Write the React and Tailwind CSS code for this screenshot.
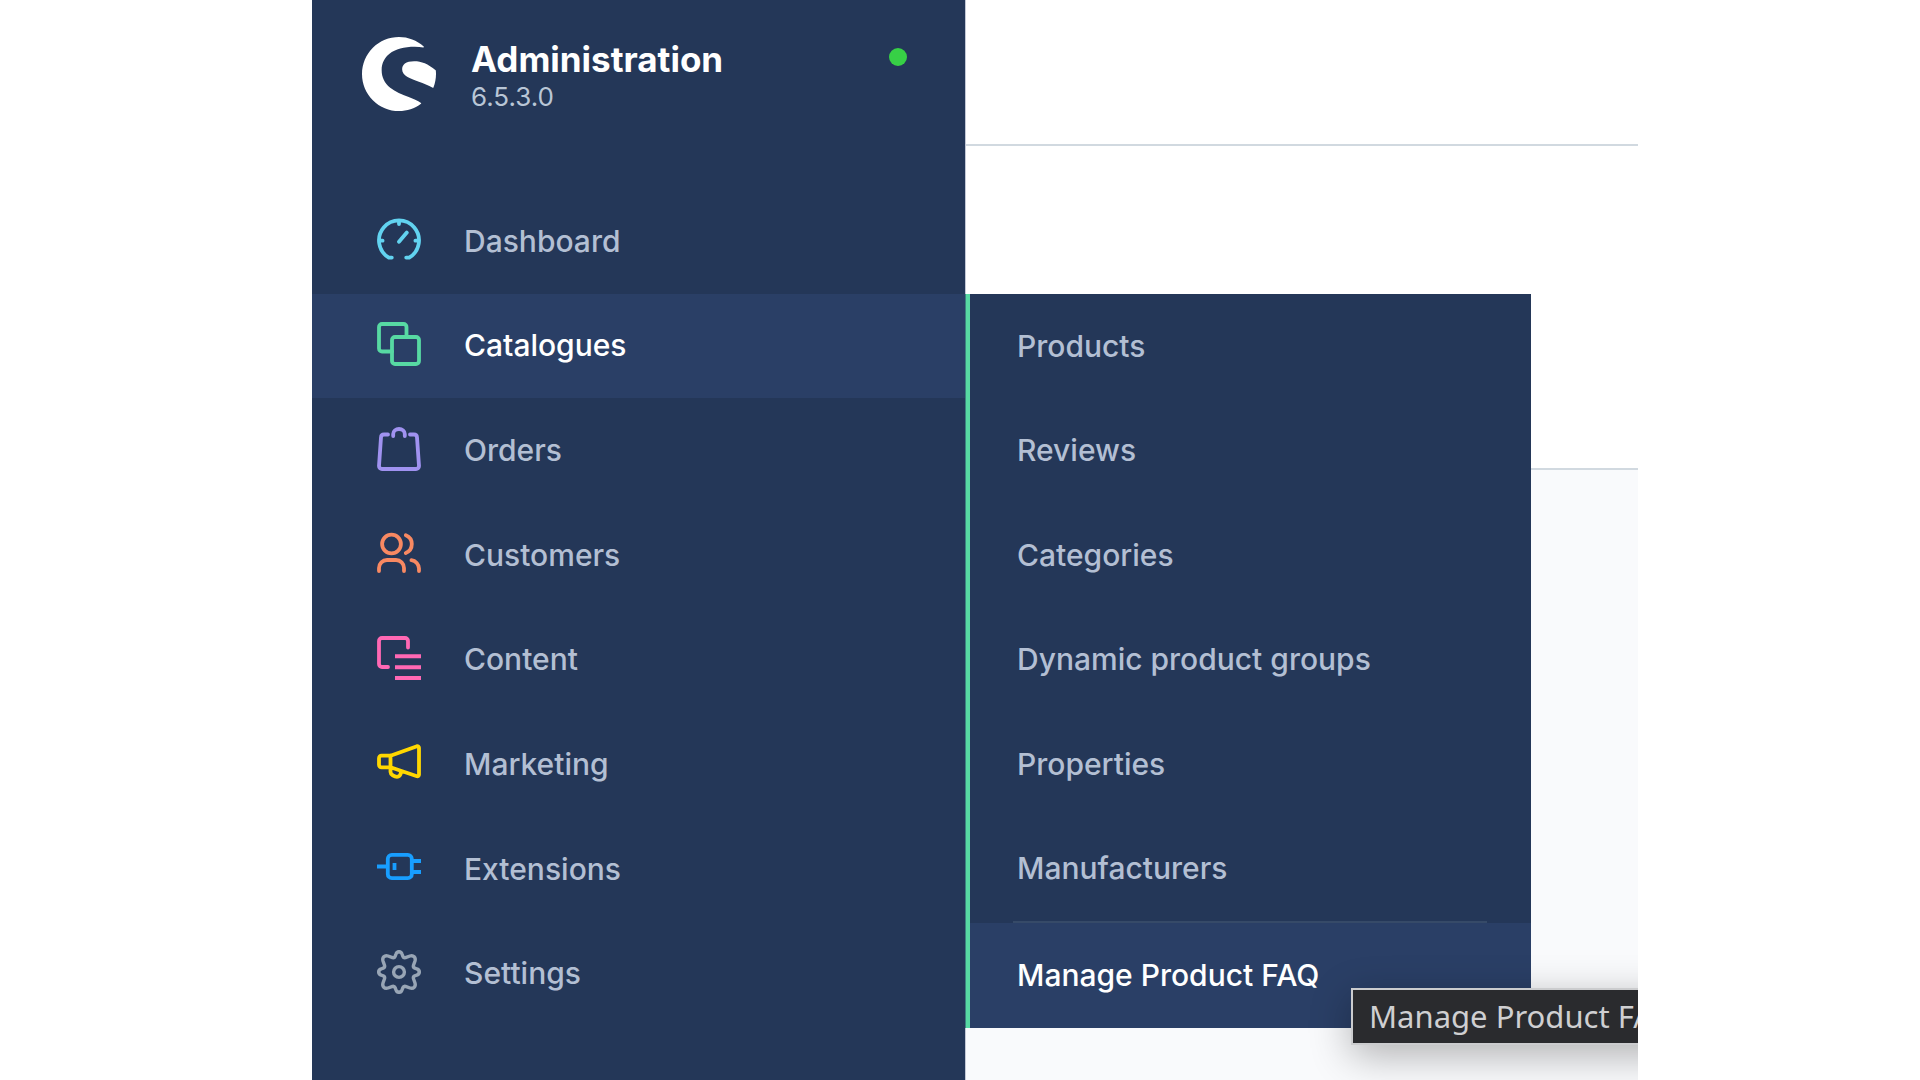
import { SiShopware } from 'react-icons/si'

function Icon({ className, children }) {
  return (
    <svg
      viewBox="0 0 44 44"
      className={`w-11 h-11 shrink-0 mb-1 ${className}`}
      fill="none"
      stroke="currentColor"
      strokeWidth="3.8"
      strokeLinecap="round"
      strokeLinejoin="round"
      aria-hidden="true"
    >
      {children}
    </svg>
  )
}

const DashboardIcon = () => (
  <Icon className="text-[#62d3f0]">
    <path d="M14.8 40.6H11.8A20 20 0 1 1 32.2 40.6H29.2M22 4v3M3 23.7h2.6M38.4 23.7H41M22 24.8l7.8-9.2" />
  </Icon>
)

const CataloguesIcon = () => (
  <Icon className="text-[#57d9a3]">
    <path d="M29.5 15V5a3 3 0 0 0-3-3H5a3 3 0 0 0-3 3v21.5a3 3 0 0 0 3 3h10" />
    <rect x="15" y="15" width="27" height="27" rx="3" />
  </Icon>
)

const OrdersIcon = () => (
  <Icon className="text-[#a092f0]">
    <path d="M11 7.5H7a3 3 0 0 0-3 2.8L2 39a3 3 0 0 0 3 3h34a3 3 0 0 0 3-3L40 10.3a3 3 0 0 0-3-2.8h-4" />
    <path d="M16.2 9V7a5.8 5 0 0 1 11.6 0v2" />
  </Icon>
)

const CustomersIcon = () => (
  <Icon className="text-[#f88962]">
    <circle cx="14.5" cy="13" r="9.4" />
    <path d="M28.8 4.2a9.6 9.6 0 0 1 0 17.8M2 40V37a8 8 0 0 1 8-8h9a8 8 0 0 1 8 8v3M34.4 29.2A8.6 8.6 0 0 1 42 37.5v2.5" />
  </Icon>
)

const ContentIcon = () => (
  <Icon className="text-[#ff68b4]">
    <path d="M31 11.5V5a3 3 0 0 0-3-3H5a3 3 0 0 0-3 3v23a3 3 0 0 0 3 3h6" />
    <path strokeLinecap="butt" strokeWidth="4" d="M18 20.3h26M18 31.2h26M18 42h26" />
  </Icon>
)

const MarketingIcon = () => (
  <Icon className="text-[#ffd700]">
    <path d="M13.5 15.7 40 6.2a1.6 1.6 0 0 1 2 1.5v27a1.6 1.6 0 0 1-2 1.5L13.5 27.3zM13.5 15.7H4.5A2.5 2.5 0 0 0 2 18.2v6.6a2.5 2.5 0 0 0 2.5 2.5h9M13.5 27.3V32c0 2.5 4 4.8 6.5 4.8 2 0 3.8-1.8 3.8-4v-1.4" />
  </Icon>
)

const ExtensionsIcon = () => (
  <Icon className="text-[#189eff]">
    <rect x="10.8" y="9.8" width="24" height="23.4" rx="4" />
    <path strokeLinecap="butt" d="M0 21.5h10.5M35 16h9M35 27h9M17.5 18v7" />
  </Icon>
)

const GEAR_QUARTER =
  'M0-20.3Q2.3-20.3 3-18L3.8-15.8Q4.6-14 6.5-14.4L11-16Q13.6-16.8 15.2-15.2Q16.8-13.6 16-11L14.4-6.5Q14-4.6 15.8-3.8L18-3Q20.3-2.3 20.3 0'

const SettingsIcon = () => (
  <Icon className="text-[#98a5b5]">
    <g transform="translate(22 22)" strokeWidth="3.4">
      <circle r="5.4" />
      {[0, 90, 180, 270].map((a) => (
        <path key={a} d={GEAR_QUARTER} transform={`rotate(${a})`} />
      ))}
    </g>
  </Icon>
)

const NAV = [
  { label: 'Dashboard', icon: DashboardIcon },
  { label: 'Catalogues', icon: CataloguesIcon, active: true },
  { label: 'Orders', icon: OrdersIcon },
  { label: 'Customers', icon: CustomersIcon },
  { label: 'Content', icon: ContentIcon },
  { label: 'Marketing', icon: MarketingIcon },
  { label: 'Extensions', icon: ExtensionsIcon },
  { label: 'Settings', icon: SettingsIcon },
]

const SUB_NAV = [
  'Products',
  'Reviews',
  'Categories',
  'Dynamic product groups',
  'Properties',
  'Manufacturers',
]

function Sidebar() {
  return (
    <aside className="w-[654px] shrink-0 border-r border-[#c3c8d6] bg-[#243758]">
      <header className="h-[189px] flex items-start pl-[50px] pr-[58px] pt-9">
        <SiShopware className="w-[74px] h-[74px] mt-px text-white" aria-label="Shopware" />
        <div className="flex-1 pl-[35px] pt-1">
          <h1 className="text-[35px] leading-[38px] font-bold text-white">Administration</h1>
          <p className="text-[26px] leading-[38px] text-[#b9c6d6]">6.5.3.0</p>
        </div>
        <span className="w-[18px] h-[18px] mt-3 rounded-full bg-[#37d046]" />
      </header>

      <nav className="h-[837px] grid grid-rows-8">
        {NAV.map(({ label, icon: NavIcon, active }) => (
          <a
            key={label}
            href="#"
            className={`flex items-center gap-[43px] pl-[65px] text-[30px] font-medium ${
              active ? 'bg-[#2a3f66] text-white' : 'text-[#b3bfd3]'
            }`}
          >
            <NavIcon />
            {label}
          </a>
        ))}
      </nav>
    </aside>
  )
}

function Flyout() {
  return (
    <nav className="absolute left-[653px] top-[294px] w-[566px] border-l border-[#3d8480] bg-[#243758] text-[30px] font-medium text-[#b3bfd3]">
      <div className="border-l-4 border-[#57d9a3]">
        <div className="h-[627px] grid grid-rows-6">
          {SUB_NAV.map((label) => (
            <a key={label} href="#" className="flex items-center pl-[47px]">
              {label}
            </a>
          ))}
        </div>
        <hr className="ml-[43px] mr-11 border-t-2 border-[#364a68]" />
        <a href="#" className="h-[105px] flex items-center pl-[47px] bg-[#2a3f66] text-white">
          Manage Product FAQ
        </a>
      </div>
    </nav>
  )
}

export default function App() {
  return (
    <div className="h-screen flex bg-white pl-[312px] pr-[282px] font-['Inter',sans-serif]">
      <div className="relative flex-1 flex overflow-hidden">
        <Sidebar />
        <main className="flex-1 flex flex-col bg-[#f9fafc]">
          <div className="h-[146px] border-b-2 border-[#d1d9e0] bg-white" />
          <div className="h-[324px] border-b-2 border-[#d1d9e0] bg-white" />
        </main>
        <Flyout />
        <div
          role="tooltip"
          className="absolute left-[1039px] top-[988px] border-2 border-[#cbccce] bg-[#2a2b2e] px-4 text-[31px] leading-[53px] whitespace-nowrap text-[#cfcfd1] shadow-[0_10px_40px_rgba(0,0,0,0.3)] font-['Noto_Sans',sans-serif]"
        >
          Manage Product FAQ
        </div>
      </div>
    </div>
  )
}
